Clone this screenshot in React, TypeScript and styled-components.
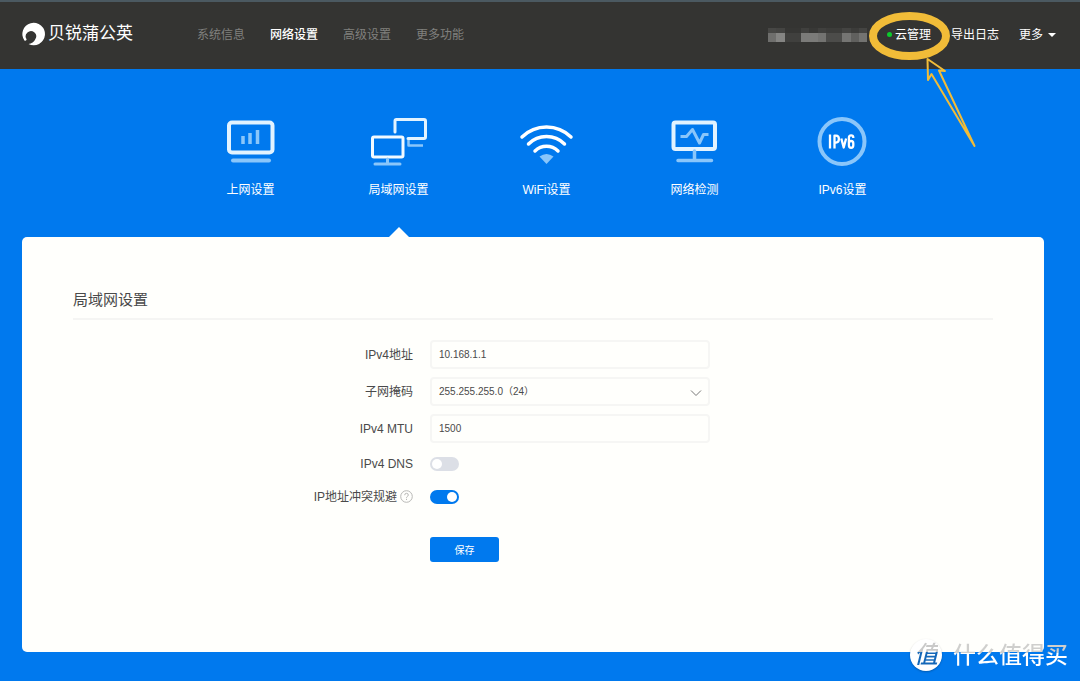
import React, { useState } from "react";
import styled, { createGlobalStyle, css } from "styled-components";

const Global = createGlobalStyle`
  * { box-sizing: border-box; }
  html { min-height: 100%; background: #0079ee; }
  body {
    margin: 0;
    color: #4a4a4a;
    font: 12px/18px "Liberation Sans", "Noto Sans CJK SC", sans-serif;
  }
  button, input, select { font-family: inherit; }
  a { color: inherit; text-decoration: none; }
`;

const Page = styled.div`
  position: relative;
  min-height: 100vh;
  padding-bottom: 29px;
  background: #0079ee;
`;

const Header = styled.header`
  display: flex;
  align-items: center;
  height: 69px;
  padding: 0 24px 2px 22px;
  border-top: 2px solid #4b5961;
  background: #343432;
`;

const Brand = styled.a`
  display: flex;
  align-items: center;
  gap: 3px;
  width: 175px;
  padding-bottom: 2px;
  color: #fff;
  font-size: 17px;
  line-height: 24px;
`;

const Nav = styled.nav`
  display: flex;
  gap: 25px;
  flex: 1;
`;

const NavLink = styled.a<{ $active?: boolean }>`
  color: ${(p) => (p.$active ? "#fff" : "#80807e")};
  font-weight: ${(p) => (p.$active ? 500 : 400)};
`;

const Tools = styled.div`
  display: flex;
  align-items: center;
  gap: 20px;
  color: #fff;
`;

const CloudLink = styled.a`
  position: relative;
  display: flex;
  align-items: center;
  gap: 3px;
`;

const Dot = styled.span`
  width: 5px;
  height: 5px;
  border-radius: 50%;
  background: #0bcb2b;
`;

const Annotation = styled.svg`
  position: absolute;
  left: -20px;
  top: -26px;
  pointer-events: none;
`;

const MoreButton = styled.button`
  display: flex;
  align-items: center;
  gap: 5px;
  padding: 0;
  border: 0;
  background: none;
  color: #fff;
  font-size: 12px;
  line-height: 18px;
`;

const Caret = styled.span`
  border: solid transparent;
  border-width: 4px 4px 0;
  border-top-color: #fff;
`;

const Features = styled.nav`
  display: flex;
  justify-content: center;
  padding: 45px 0 0 13px;
`;

const Feature = styled.a<{ $active?: boolean }>`
  display: flex;
  flex-direction: column;
  align-items: center;
  gap: 10px;
  width: 148px;
  height: 123px;
  color: #fff;

  ${(p) =>
    p.$active &&
    css`
      &::after {
        content: "";
        margin-top: auto;
        border: solid transparent;
        border-width: 0 10px 10px;
        border-bottom-color: #fffffc;
      }
    `}
`;

const Card = styled.main`
  min-height: 415px;
  margin: 0 36px 0 22px;
  padding: 50px 51px;
  border-radius: 5px;
  background: #fffffc;
`;

const Title = styled.h1`
  margin: 0;
  padding-bottom: 6px;
  border-bottom: 2px solid #f5f5f3;
  font-size: 15px;
  line-height: 25px;
  font-weight: 400;
`;

const Form = styled.form`
  display: flex;
  flex-direction: column;
  gap: 8px;
  padding-top: 20px;
`;

const Row = styled.div<{ $compact?: boolean }>`
  display: grid;
  grid-template-columns: 340px minmax(0, 280px);
  column-gap: 17px;
  align-items: center;
  min-height: ${(p) => (p.$compact ? 25 : 29)}px;
`;

const LabelCell = styled.div`
  display: flex;
  justify-content: flex-end;
  align-items: center;
  gap: 3px;
`;

const field = css`
  width: 100%;
  height: 29px;
  padding: 0 7px;
  border: 2px solid #f6f6f4;
  border-radius: 4px;
  background: #fffffc;
  color: #4a4a4a;
  font-size: 10px;
`;

const TextInput = styled.input`
  ${field}
`;

const SelectWrap = styled.div`
  position: relative;
`;

const Select = styled.select`
  ${field}
  appearance: none;
`;

const Chevron = styled.svg`
  position: absolute;
  right: 8px;
  top: 12px;
  pointer-events: none;
`;

const Switch = styled.input`
  display: flex;
  align-items: center;
  width: 29px;
  height: 14px;
  margin: 0;
  padding: 0 2px;
  border-radius: 7px;
  appearance: none;
  background: #dcdfe6;

  &::before {
    content: "";
    width: 10px;
    height: 10px;
    border-radius: 50%;
    background: #fff;
  }
  &:checked {
    justify-content: flex-end;
    background: #0079ee;
  }
`;

const SaveButton = styled.button`
  grid-column: 2;
  justify-self: start;
  width: 69px;
  height: 25px;
  margin-top: 20px;
  padding: 0;
  border: 0;
  border-radius: 3px;
  background: #0079ee;
  color: #fff;
  font-size: 10px;
`;

const Watermark = styled.div`
  position: absolute;
  right: 12px;
  bottom: 9px;
  display: flex;
  align-items: center;
  gap: 11px;
  font-size: 23px;
  line-height: 34px;
`;

const Seal = styled.span`
  display: flex;
  align-items: center;
  justify-content: center;
  width: 32px;
  height: 32px;
  border-radius: 50%;
  background: #fff;
  box-shadow: 0 1px 2px rgba(0, 0, 0, 0.25);
  font-size: 24px;
  font-weight: 500;
`;

const SealText = styled.span`
  background: linear-gradient(#c9c9c9 42%, #1467b8 42%);
  background-clip: text;
  color: transparent;
  font-style: italic;
`;

const MarkText = styled.span`
  background: linear-gradient(#cfcfcd 43%, #fff 43%);
  background-clip: text;
  color: transparent;
  font-weight: 500;
`;

const mosaic = [
  ["#474745", "#6f6f6d"], ["#444442", "#858583"], ["#363634", "#40403e"], ["#363634", "#40403e"],
  ["#40403e", "#7b7b79"], ["#383836", "#7b7b79"], ["#40403e", "#737371"], ["#3c3c3a", "#4c4c4a"],
  ["#3c3c3a", "#4c4c4a"], ["#444442", "#757573"], ["#3c3c3a", "#60605e"], ["#444442", "#737371"],
];

const MaskedName = () => (
  <svg width="99" height="14" viewBox="0 0 12 14" preserveAspectRatio="none" shapeRendering="crispEdges" aria-hidden="true">
    {mosaic.map(([top, bottom], i) => (
      <g key={i}>
        <rect x={i} y="0" width="1" height="5" fill={top} />
        <rect x={i} y="5" width="1" height="9" fill={bottom} />
      </g>
    ))}
  </svg>
);

const Logo = () => (
  <svg width="23" height="24" viewBox="0 0 23 24" aria-hidden="true">
    <path
      fill="#fff"
      d="M2.600 18.800A11.300 11.300 0 1 1 6.500 22.100C9.500 21.800 12.200 20 13.400 17A5.200 5.200 0 1 0 4.600 17.200C4.500 18.200 3.700 18.800 2.600 18.800Z"
    />
  </svg>
);

const light = "#8ac6fa";

const icons = {
  wan: (
    <>
      <rect x="8" y="8.5" width="43.500" height="30" rx="3" stroke="#e2f3ff" strokeWidth="4" />
      <path d="M22 30v-8M29 30V19M36.500 30V16" stroke={light} strokeWidth="3.500" />
      <path d="M12 46.500h36" stroke={light} strokeWidth="4" strokeLinecap="round" />
    </>
  ),
  lan: (
    <>
      <path d="M26 18V7a1.500 1.500 0 0 1 1.500-1.500h27.500a1.500 1.500 0 0 1 1.500 1.500V23a1.500 1.500 0 0 1-1.500 1.500H39" stroke="#e2f3ff" strokeWidth="3" strokeLinecap="round" />
      <path d="M39.500 26v5.500H54" stroke={light} strokeWidth="2.500" />
      <rect x="3.500" y="23" width="30.500" height="20" rx="1.500" stroke="#f2faff" strokeWidth="3" />
      <path d="M18.500 45v5M6 50h25" stroke={light} strokeWidth="3" strokeLinecap="round" />
    </>
  ),
  wifi: (
    <>
      <path d="M5 23a35 35 0 0 1 49 0M11.500 30a25.500 25.500 0 0 1 36 0M18 37a16.500 16.500 0 0 1 23 0" stroke="#fff" strokeWidth="3.500" strokeLinecap="round" />
      <path d="M29.500 50l-7-7.500q7-5 14 0z" fill={light} />
    </>
  ),
  check: (
    <>
      <rect x="8.500" y="8.500" width="41.500" height="26.500" rx="2" stroke="#e2f3ff" strokeWidth="4" />
      <path d="M15.500 22.500h6L27.500 15.500l7 13.500L38.500 20.500h5" stroke={light} strokeWidth="3" />
      <path d="M29.500 37v9M13 46.500h33.500" stroke={light} strokeWidth="3.500" strokeLinecap="round" />
    </>
  ),
  ipv6: (
    <>
      <circle cx="29" cy="27.500" r="22.500" stroke={light} strokeWidth="4" />
      <g stroke="#fff" strokeWidth="2.300">
        <path d="M17 20.500v14M21.500 34.500v-12.900h1.500q2.900 0 2.900 3.500t-2.900 3.500h-1.500M28.300 24.500l2.400 9 2.400-9" />
        <path d="M40.300 24v-.5q0-2.200-2.200-2.200t-2.200 2.500v7.500q0 2.500 2.200 2.500t2.200-2.500v-1.800q0-2.500-2.200-2.500t-2.200 2" />
      </g>
    </>
  ),
};

const features: { id: keyof typeof icons; label: string }[] = [
  { id: "wan", label: "上网设置" },
  { id: "lan", label: "局域网设置" },
  { id: "wifi", label: "WiFi设置" },
  { id: "check", label: "网络检测" },
  { id: "ipv6", label: "IPv6设置" },
];

const navItems = ["系统信息", "网络设置", "高级设置", "更多功能"];

export default function App() {
  const [dns, setDns] = useState(false);
  const [avoid, setAvoid] = useState(true);

  return (
    <>
      <Global />
      <Page>
        <Header>
          <Brand href="#"><Logo />贝锐蒲公英</Brand>
          <Nav>
            {navItems.map((item) => (
              <NavLink key={item} href="#" $active={item === "网络设置"}>{item}</NavLink>
            ))}
          </Nav>
          <Tools>
            <MaskedName />
            <CloudLink href="#">
              <Dot />云管理
              <Annotation width="112" height="150" viewBox="0 0 112 150" fill="none" stroke="#f1bc38" aria-hidden="true">
                <ellipse cx="42.500" cy="36" rx="36.500" ry="20" strokeWidth="8" />
                <path d="M60.500 59l17.500 12-6-.5L107.500 146 64.500 74l-3.500 6z" strokeWidth="2" strokeLinejoin="round" />
              </Annotation>
            </CloudLink>
            <a href="#">导出日志</a>
            <MoreButton type="button">更多<Caret /></MoreButton>
          </Tools>
        </Header>

        <Features>
          {features.map(({ id, label }) => (
            <Feature key={id} href="#" $active={id === "lan"}>
              <svg width="60" height="57" viewBox="0 0 60 57" fill="none" strokeLinejoin="round" aria-hidden="true">
                {icons[id]}
              </svg>
              {label}
            </Feature>
          ))}
        </Features>

        <Card>
          <Title>局域网设置</Title>
          <Form onSubmit={(e) => e.preventDefault()}>
            <Row>
              <LabelCell><label htmlFor="ip">IPv4地址</label></LabelCell>
              <TextInput id="ip" defaultValue="10.168.1.1" />
            </Row>
            <Row>
              <LabelCell><label htmlFor="mask">子网掩码</label></LabelCell>
              <SelectWrap>
                <Select id="mask"><option>255.255.255.0（24）</option></Select>
                <Chevron width="12" height="8" viewBox="0 0 12 8" fill="none" stroke="#777" aria-hidden="true">
                  <path d="M1 1.500l5 5 5-5" />
                </Chevron>
              </SelectWrap>
            </Row>
            <Row>
              <LabelCell><label htmlFor="mtu">IPv4 MTU</label></LabelCell>
              <TextInput id="mtu" defaultValue="1500" />
            </Row>
            <Row $compact>
              <LabelCell><label htmlFor="dns">IPv4 DNS</label></LabelCell>
              <Switch id="dns" type="checkbox" checked={dns} onChange={() => setDns(!dns)} />
            </Row>
            <Row $compact>
              <LabelCell>
                <label htmlFor="avoid">IP地址冲突规避</label>
                <svg width="13" height="13" viewBox="0 0 13 13" fill="none" stroke="#b8b8b6" aria-hidden="true">
                  <circle cx="6.500" cy="6.500" r="5.800" />
                  <path d="M4.700 5.200q0-1.900 1.800-1.900t1.800 1.700q0 1-1 1.500-.8.400-.8 1.300M6.500 8.800v1.200" />
                </svg>
              </LabelCell>
              <Switch id="avoid" type="checkbox" checked={avoid} onChange={() => setAvoid(!avoid)} />
            </Row>
            <Row><SaveButton type="submit">保存</SaveButton></Row>
          </Form>
        </Card>

        <Watermark>
          <Seal><SealText>值</SealText></Seal>
          <MarkText>什么值得买</MarkText>
        </Watermark>
      </Page>
    </>
  );
}
